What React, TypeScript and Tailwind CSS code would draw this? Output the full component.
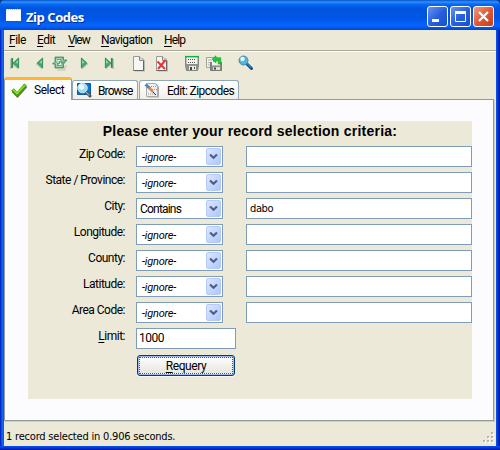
import React from "react";

const Menu = ({ text, w, gap }: { text: string; w: string; gap: string }) => (
  <span className={`${w} ${gap} whitespace-nowrap`}>
    <span className="underline underline-offset-2">{text[0]}</span>
    {text.slice(1)}
  </span>
);

const Arrow = ({ back = false, bar = false }: { back?: boolean; bar?: boolean }) => (
  <svg width="12" height="14" viewBox="0 0 12 14" className={`shrink-0 ${back ? "-scale-x-100" : ""}`}>
    <path d="M3 3v10.5L9.5 8Z" fill="#aebfa6" opacity=".8" />
    {bar && <path d="M10.2 3v10" stroke="#aebfa6" strokeWidth="1.4" />}
    <path d="M2.4 2 7.8 7 2.4 12Z" fill="#45ad6b" stroke="#2c884c" strokeWidth=".9" />
    <path d="M3 4v3.5l2.5-.7Z" fill="#8fe0a6" />
    {bar && <path d="M8.8 2v10" stroke="#2f8a50" strokeWidth="1.8" />}
  </svg>
);

const Refresh = () => (
  <svg width="16" height="16" viewBox="0 0 16 16" className="shrink-0">
    <path d="M5 15h8v-4h2" fill="none" stroke="#bfc2b0" />
    <path d="M3 2h8.500v3H15l-3.500 4v4H3V9H.5L3 6.500Z" fill="#5fa574" stroke="#4a8a5c" strokeWidth=".8" />
    <path d="M4.500 7V3.500h5.500v2.500h2.500M10 8.500v3H4.500V8H2.500" fill="none" stroke="#a9d8b5" />
    <path d="M6 8V5.500h2.500M6.500 9.500H8.500V7.500" fill="none" stroke="#edf8ee" strokeWidth="1.200" />
  </svg>
);

const Page = ({ del = false }: { del?: boolean }) => (
  <svg width="14" height="17" viewBox="0 0 14 17" className="shrink-0">
    <path d="M3 3h8l2 3v10.500H3Z" fill="#999" opacity=".6" />
    <path d="M1.500 1.500h6l4 4v10h-10Z" fill="#f6f6f6" stroke="#999" />
    <path d="M11.500 5.500v10h-10" fill="none" stroke="#666" />
    <path d="M7.500 1.500v4h4" fill="#dedede" stroke="#888" />
    {del && <path d="M2.500 6.500 10 14M10.500 5 3 14" stroke="#e9352f" strokeWidth="2" />}
  </svg>
);

const Disk = ({ reload = false }: { reload?: boolean }) => (
  <svg width="17" height="17" viewBox="0 0 17 17" className="shrink-0">
    {reload ? (
      <>
        <path d="M.500 2.500h7v10h-7Z" fill="#f1f1ec" stroke="#a3a39b" />
        <path d="M2 5h4M2 7.500h3M2 10h2" stroke="#b5b5ad" />
        <path d="M4.500 7.500h11v8h-11Z" fill="#8b8b86" stroke="#777" />
        <path d="M6 7h8v3.500H6Z" fill="#eeeeea" />
        <path d="M7 12h7v3H7Z" fill="#deded9" />
        <path d="M8 12.500h2v2H8Z" fill="#444" />
        <path d="M6 4.200 10 .8v2h4.800V9h-2.600V5.700H10v2Z" fill="#1dcc3a" stroke="#0b9a2a" strokeWidth=".600" />
      </>
    ) : (
      <>
        <path d="M1.500 1.500h13v9l-1 5h-11l-1-5Z" fill="#92928d" stroke="#85857f" />
        <path d="M1 1.500h14" stroke="#18ad38" strokeWidth="1.200" />
        <path d="M2.500 2.500h11v6.500h-11Z" fill="#f3f3ed" />
        <path d="M4 4.500h8M4 7.500h8" stroke="#555" strokeDasharray="1 1" />
        <path d="M5 11h7v4H5Z" fill="#eee" />
        <path d="M6 12h2v3H6ZM10 12h1v2h-1Z" fill="#444" />
      </>
    )}
  </svg>
);

const Lens = ({ tab = false }: { tab?: boolean }) => (
  <svg width="16" height="16" viewBox="0 0 16 16" className="shrink-0">
    {tab && <path d="M1.500 1.500h13v11h-13Z" fill="#0874d4" stroke="#0759a2" />}
    <path d={tab ? "m10 10 4 4" : "m8.500 8.500 5 5"} stroke={tab ? "#454b50" : "#164b7d"} strokeWidth="3" strokeLinecap="round" />
    <path d={tab ? "m10 10 3.500 3.500" : "m8.500 8 4.500 4.500"} stroke={tab ? "#9aa6ad" : "#2c80c3"} strokeWidth="1.200" />
    <circle cx={tab ? 6.5 : 5.5} cy={tab ? 6 : 5.5} r={tab ? 4.8 : 4.5} fill={tab ? "#a3daf0" : "#56b3d9"} stroke={tab ? "#c4e3ed" : "#438eae"} />
    <circle cx={tab ? 5.5 : 4.5} cy={tab ? 4.8 : 4} r={tab ? 2.8 : 2.2} fill="#e5faff" />
  </svg>
);

const Combo = ({ value }: { value: string }) => (
  <div className="flex h-[21px] w-[87px] items-center justify-between border border-[#7f9db9] bg-white pl-[3px] pr-px">
    {value === "Contains" ? (
      <span className="pt-px text-[12px] tracking-[-0.8px]">{value}</span>
    ) : (
      <span className="pl-[2px] pt-[2px] text-[11px] italic tracking-[-0.2px]">{value}</span>
    )}
    <span className="flex h-[17px] w-[15px] items-center justify-center rounded-[2px] border border-[#b6cafa] bg-linear-to-br from-[#dce7ff] to-[#afc6fb]">
      <svg width="9" height="7" viewBox="0 0 9 7"><path d="m1 1.500 3.500 3.300L8 1.500" fill="none" stroke="#4d6185" strokeWidth="2.200" /></svg>
    </span>
  </div>
);

const rows = [
  ["Zip Code:", "-ignore-", ""],
  ["State / Province:", "-ignore-", ""],
  ["City:", "Contains", "dabo"],
  ["Longitude:", "-ignore-", ""],
  ["County:", "-ignore-", ""],
  ["Latitude:", "-ignore-", ""],
  ["Area Code:", "-ignore-", ""],
];

const control = "flex h-[21px] w-[21px] items-center justify-center rounded-[3px] border border-white";

export default function App() {
  return (
    <div className="h-[450px] w-[500px] overflow-hidden bg-[#063d87] font-[Roboto,sans-serif] text-[12px] leading-[14px] text-black">
      <div className="flex h-full flex-col rounded-t-[5px] bg-[linear-gradient(90deg,#001dba_0,#0831d9_1px,#166aee_2px,#0755dd_4px,#0755dd_496px,#0049ef_497px,#0020b5_499px,#00108a_500px)]">
        <header className="flex h-[30px] shrink-0 items-center rounded-t-[5px] bg-[linear-gradient(180deg,#0453c5_0,#3290ff_2px,#086bf3_4px,#0055df_8px,#0055e5_18px,#0665ff_26px,#0054e3_28px,#0045c7_30px)] px-[6px]">
          <svg width="15" height="13" viewBox="0 0 15 13"><path d="M0 0h15v12H0Z" fill="#fff" /><path d="M0 .5h15" stroke="#8ec5fa" strokeDasharray="1 1" /></svg>
          <span className="ml-[5px] mt-[4px] font-['Open_Sans',sans-serif] text-[13px] font-bold tracking-[-0.45px] text-white [text-shadow:1px_1px_#003591]">Zip Codes</span>
          <div className="ml-auto mt-[3px] flex gap-[2px]">
            <span className={`${control} bg-linear-to-br from-[#6992ef] via-[#2760df] to-[#144dce]`}><svg width="13" height="13"><path d="M1 10.500h7" stroke="white" strokeWidth="3" /></svg></span>
            <span className={`${control} bg-linear-to-br from-[#6992ef] via-[#2760df] to-[#144dce]`}><svg width="13" height="13"><path d="M1.500 2v9.500h10V2M1 2.500h11" fill="none" stroke="white" /><path d="M1 2.500h11" stroke="white" strokeWidth="3" /></svg></span>
            <span className={`${control} bg-linear-to-br from-[#ec997f] via-[#e25835] to-[#c93c16]`}><svg width="13" height="13"><path d="m2 2 9 9M11 2l-9 9" stroke="white" strokeWidth="2.200" /></svg></span>
          </div>
        </header>
        <div className="mx-[4px] flex h-[416px] shrink-0 flex-col bg-[#ece9d8]">
          <nav className="flex h-[20px] shrink-0 items-center pl-[5px] text-[12px]">
            <Menu text="File" w="w-[28px]" gap="tracking-[-0.5px]" />
            <Menu text="Edit" w="w-[31px]" gap="tracking-[-0.55px]" />
            <Menu text="View" w="w-[33px]" gap="tracking-[-1.1px]" />
            <Menu text="Navigation" w="w-[63px]" gap="tracking-[-0.6px]" />
            <Menu text="Help" w="w-[24px]" gap="tracking-[-0.9px]" />
          </nav>
          <div className="h-[2px] shrink-0 border-t border-[#aca899] bg-white" />
          <div className="flex h-[25px] shrink-0 items-center pb-[3px] pl-[5px]">
            <Arrow back bar />
            <span className="w-[12px]" /><Arrow back />
            <span className="w-[7px]" /><Refresh />
            <span className="w-[11px]" /><Arrow />
            <span className="w-[12px]" /><Arrow bar />
            <span className="w-[17px]" /><Page />
            <span className="w-[9px]" /><Page del />
            <span className="w-[15px]" /><Disk />
            <span className="w-[5px]" /><Disk reload />
            <span className="w-[15px]" /><Lens />
          </div>
          <div className="z-10 flex h-[22px] shrink-0 items-end">
            <div className="-mb-px flex h-[23px] w-[68px] items-center rounded-t-[3px] border-x border-t-[3px] border-x-[#919b9c] border-t-[#ffb72c] bg-[#fcfcfe] pl-[6px]">
              <svg width="17" height="15" viewBox="0 0 17 15"><path d="m2 8 4.500 4.500L15 3" fill="none" stroke="#6b7a55" strokeWidth="3.500" /><path d="m1.500 6.500 4.500 5L14.500 1.500" fill="none" stroke="#3f9e0a" strokeWidth="3.400" /><path d="m2 6.500 4 4L14 2" fill="none" stroke="#8be321" strokeWidth="1.700" /></svg>
              <span className="mb-px ml-[6px] tracking-[-0.45px]">Select</span>
            </div>
            <div className="flex h-[19px] w-[66px] items-center rounded-t-[3px] border border-b-0 border-[#91a7b4] bg-linear-to-b from-white to-[#f0f0ea] pl-[3px]">
              <Lens tab /><span className="ml-[6px] pt-[2px] tracking-[-0.9px]">Browse</span>
            </div>
            <div className="ml-px flex h-[19px] w-[100px] items-center rounded-t-[3px] border border-b-0 border-[#91a7b4] bg-linear-to-b from-white to-[#f0f0ea] pl-[4px]">
              <svg width="16" height="16" viewBox="0 0 16 16"><path d="M4 2h9l2 3v10.500H4Z" fill="#aaa" /><path d="M2.500 1.500h9l2 3v10h-11Z" fill="#eee" stroke="#aaa" /><path d="M5 4.500h7M8 7.500h5M4 12h7" stroke="#999" strokeDasharray="1 1" /><path d="m1.500 2.500 5 4.500" stroke="#5384b1" strokeWidth="3" /><path d="m5 5.500 4 4.500" stroke="#d98657" strokeWidth="2.500" /><path d="m9 10 3 3" stroke="#333" /></svg>
              <span className="ml-[7px] whitespace-nowrap pt-[2px] tracking-[-0.6px]">Edit: Zipcodes</span>
            </div>
          </div>
          <main className="mr-[2px] h-[322px] shrink-0 border border-[#919b9c] bg-[#fcfcfe] pl-[23px] pt-[21px] shadow-[1px_1px_#d0cec1]">
            <section className="h-[278px] w-[444px] bg-[#ece9d8]">
              <h1 className="h-[25px] whitespace-nowrap pt-[3px] text-center font-['Liberation_Sans',sans-serif] text-[14px] font-bold tracking-[0.24px]">Please enter your record selection criteria:</h1>
              <div className="flex flex-col gap-[5px]">
                {rows.map(([label, operator, value]) => (
                  <div className="flex h-[21px]" key={label}>
                    <label className="mr-[11px] w-[97px] whitespace-nowrap pt-px text-right tracking-[-0.5px]">{label}</label>
                    <Combo value={operator} />
                    <div className="ml-[23px] h-[21px] w-[226px] border border-[#7f9db9] bg-white pl-[3px] pt-[3px] font-['DejaVu_Sans_Condensed','DejaVu_Sans',sans-serif] text-[11px] tracking-[-0.4px]">{value}</div>
                  </div>
                ))}
                <div className="flex h-[21px]">
                  <label className="mr-[11px] w-[97px] pt-px text-right tracking-[-0.5px]"><u className="underline-offset-2">L</u>imit:</label>
                  <div className="h-[21px] w-[100px] border border-[#7f9db9] bg-white pl-[2px] pt-[2px] tracking-[-0.5px]">1000</div>
                </div>
              </div>
              <button className="ml-[109px] mt-[6px] flex h-[21px] w-[98px] rounded-[3px] border border-[#003c74] bg-[#9fb9ee] p-px shadow-[0_1px_#f8f7ef]">
                <span className="flex h-full w-full items-center justify-center border border-dotted border-[#555] bg-linear-to-b from-[#fcfcfb] to-[#e7e6df] tracking-[-0.4px]"><u className="underline-offset-2">R</u>equery</span>
              </button>
            </section>
          </main>
          <footer className="flex h-[25px] shrink-0 items-center justify-between pl-[2px] pr-px pt-[7px] font-['DejaVu_Sans_Condensed','DejaVu_Sans',sans-serif] text-[11px] tracking-[-0.2px]">
            <span>1 record selected in 0.906 seconds.</span>
            <svg width="12" height="12" viewBox="0 0 12 12"><path d="M1 10h2v2H1zM5 10h2v2H5zM9 10h2v2H9zM5 6h2v2H5zM9 6h2v2H9zM9 2h2v2H9z" fill="white" /><path d="M0 9h2v2H0zM4 9h2v2H4zM8 9h2v2H8zM4 5h2v2H4zM8 5h2v2H8zM8 1h2v2H8z" fill="#b8b4a3" /></svg>
          </footer>
        </div>
        <div className="h-[4px] shrink-0 bg-linear-to-b from-[#0751ed] via-[#0039dc] to-[#001390]" />
      </div>
    </div>
  );
}
